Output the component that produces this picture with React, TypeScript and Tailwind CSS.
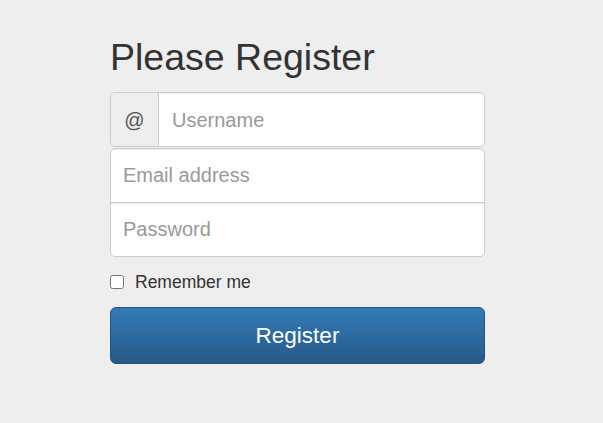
import React, { useState } from "react";

const App: React.FC = () => {
  const [form, setForm] = useState({ username: "", email: "", password: "" });
  const [remember, setRemember] = useState(false);

  const handleChange = (e: React.ChangeEvent<HTMLInputElement>) => {
    const { id, value } = e.target;
    setForm((prev) => ({ ...prev, [id]: value }));
  };

  return (
    <div
      className="min-h-screen bg-[#eeeeee] pt-[37px]"
      style={{ fontFamily: '"Liberation Sans", Arial, sans-serif' }}
    >
      <form className="ml-[110px] w-[375px]" onSubmit={(e) => e.preventDefault()}>
        <h2 className="mb-[14px] text-[37.5px] leading-[41px] font-normal text-[#333333]">
          Please Register
        </h2>

        {/* Username with addon */}
        <div className="flex h-[55px] rounded-[5px] border border-[#cccccc] bg-white overflow-hidden">
          <span className="flex w-[48px] items-center justify-center border-r border-[#cccccc] bg-[#eeeeee] text-[20px] text-[#555555]">
            @
          </span>
          <input
            id="username"
            type="text"
            placeholder="Username"
            value={form.username}
            onChange={handleChange}
            className="min-w-0 flex-1 px-[13px] text-[20px] text-[#555555] outline-none placeholder:text-[#999999] shadow-[inset_0_1px_1px_rgba(0,0,0,0.075)]"
          />
        </div>

        {/* Email + password stacked */}
        <input
          id="email"
          type="email"
          placeholder="Email address"
          value={form.email}
          onChange={handleChange}
          className="mt-px block h-[55px] w-full rounded-t-[5px] border border-[#cccccc] bg-white px-[12px] text-[20px] text-[#555555] outline-none placeholder:text-[#999999] shadow-[inset_0_1px_1px_rgba(0,0,0,0.075)]"
        />
        <input
          id="password"
          type="password"
          placeholder="Password"
          value={form.password}
          onChange={handleChange}
          className="-mt-px block h-[55px] w-full rounded-b-[5px] border border-[#cccccc] bg-white px-[12px] text-[20px] text-[#555555] outline-none placeholder:text-[#999999] shadow-[inset_0_1px_1px_rgba(0,0,0,0.075)]"
        />

        <label className="mt-[15px] flex items-center gap-[11px] text-[17.5px] leading-[20px] text-[#333333]">
          <input
            type="checkbox"
            checked={remember}
            onChange={(e) => setRemember(e.target.checked)}
            className="m-0 h-[14px] w-[14px]"
          />
          Remember me
        </label>

        <button
          type="submit"
          className="mt-[15px] block h-[57px] w-full rounded-[6px] border border-[#245580] bg-gradient-to-b from-[#337ab7] to-[#265a88] text-[22.5px] text-white"
        >
          Register
        </button>
      </form>
    </div>
  );
};

export default App;
